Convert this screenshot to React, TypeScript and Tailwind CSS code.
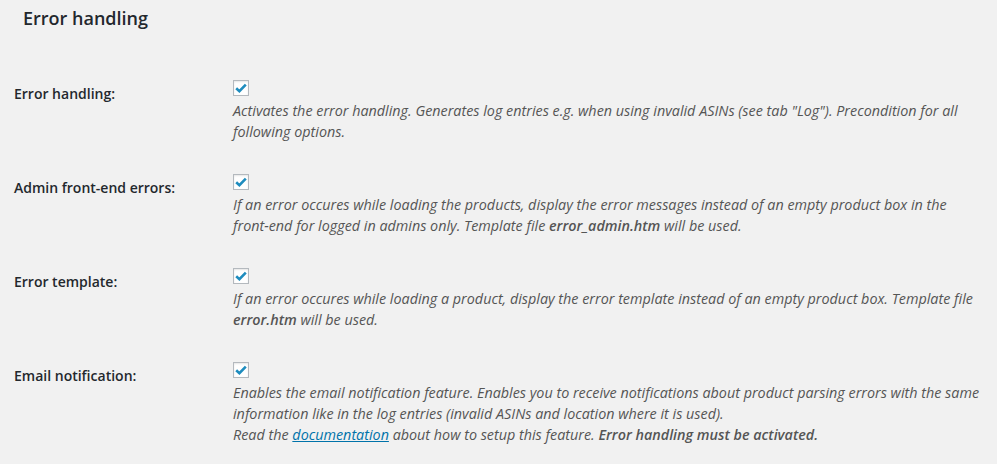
import React from "react";

const font = { fontFamily: '"Open Sans", "Noto Sans", sans-serif' };

function Check() {
  return (
    <span className="flex h-4 w-4 items-center justify-center border border-[#b4b9be] bg-white shadow-[inset_0_1px_2px_rgba(0,0,0,0.1)]">
      <svg width="12" height="10" viewBox="0 0 12 10">
        <path d="M1.2 5.2 L4.4 8.2 L10.8 1.6" fill="none" stroke="#1e8cbe" strokeWidth="2.6" strokeLinejoin="miter" />
      </svg>
    </span>
  );
}

const rows: { label: string; desc: React.ReactNode }[] = [
  {
    label: "Error handling:",
    desc: (
      <>
        Activates the error handling. Generates log entries e.g. when using invalid ASINs (see tab "Log"). Precondition for all following options.
      </>
    ),
  },
  {
    label: "Admin front-end errors:",
    desc: (
      <>
        If an error occures while loading the products, display the error messages instead of an empty product box in the <span className="whitespace-nowrap">front-end</span> for logged in admins only. Template file <b className="font-semibold">error_admin.htm</b> will be used.
      </>
    ),
  },
  {
    label: "Error template:",
    desc: (
      <>
        If an error occures while loading a product, display the error template instead of an empty product box. Template file <b className="font-semibold">error.htm</b> will be used.
      </>
    ),
  },
  {
    label: "Email notification:",
    desc: (
      <>
        Enables the email notification feature. Enables you to receive notifications about product parsing errors with the same information like in the log entries (invalid ASINs and location where it is used).
        <br />
        Read the <a className="text-[#0073aa] underline">documentation</a> about how to setup this feature. <b className="font-semibold">Error handling must be activated.</b>
      </>
    ),
  },
];

export default function App() {
  return (
    <div className="min-h-[464px] w-[997px] bg-[#f1f1f1] text-[#23282d]" style={font}>
      <h2 className="pl-[23px] pt-[6px] text-[18px] leading-[24px] font-semibold">Error handling</h2>
      <div className="pl-[14px] pt-[50px]">
        {rows.map((r) => (
          <div key={r.label} className="flex pb-[32px]">
            <div className="w-[219px] shrink-0 pt-[5px] text-[14px] leading-[18px] font-semibold">{r.label}</div>
            <div className="pr-[3px]">
              <Check />
              <p className="mt-[4px] text-[14.35px] leading-[21px] italic text-[#555]">{r.desc}</p>
            </div>
          </div>
        ))}
      </div>
    </div>
  );
}
